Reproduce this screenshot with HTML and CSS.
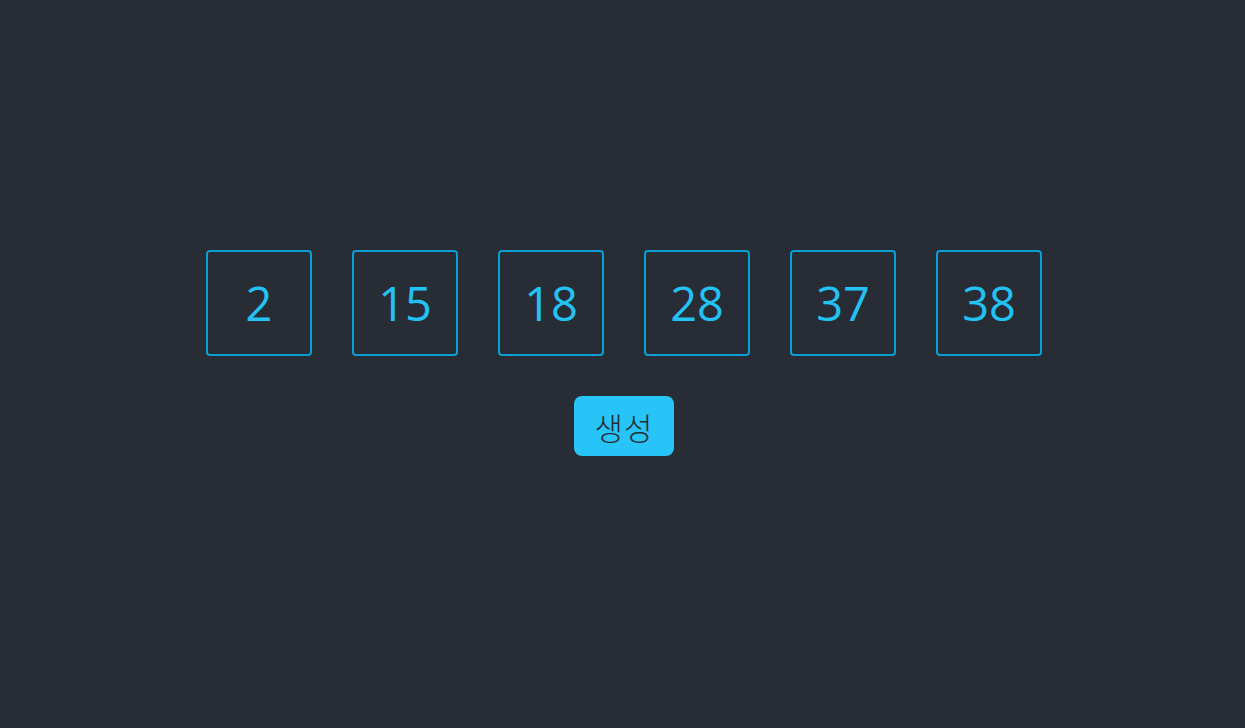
FILE: index.html
```html
<!DOCTYPE html>
<html lang="ko">
<head>
<meta charset="utf-8">
<title>로또</title>
<link rel="stylesheet" href="styles.css">
</head>
<body>
<main class="app">
  <div class="balls">
    <div class="ball">2</div>
    <div class="ball">15</div>
    <div class="ball">18</div>
    <div class="ball">28</div>
    <div class="ball">37</div>
    <div class="ball">38</div>
  </div>
  <button class="gen">생성</button>
</main>
</body>
</html>
```
FILE: styles.css
```css
html, body {
  margin: 0;
  height: 100%;
  background: #282c34;
}
body {
  font-family: "Open Sans", "Noto Sans", "Noto Sans CJK KR", sans-serif;
}
.app {
  display: flex;
  flex-direction: column;
  align-items: center;
  padding-top: 250px;
  padding-left: 3px;
  gap: 40px;
}
.balls {
  display: flex;
  gap: 40px;
}
.ball {
  box-sizing: border-box;
  width: 106px;
  height: 106px;
  border: 2px solid #0a9fd4;
  border-radius: 4px;
  display: flex;
  align-items: center;
  justify-content: center;
  color: #22c2f5;
  font-size: 47px;
  line-height: 1;
}
.gen {
  width: 100px;
  height: 60px;
  border: none;
  border-radius: 8px;
  background: #26c4f7;
  color: #282c34;
  font-family: "Noto Sans CJK KR", sans-serif;
  font-weight: 300;
  font-size: 31px;
  letter-spacing: 1px;
  padding: 0;
}
```
